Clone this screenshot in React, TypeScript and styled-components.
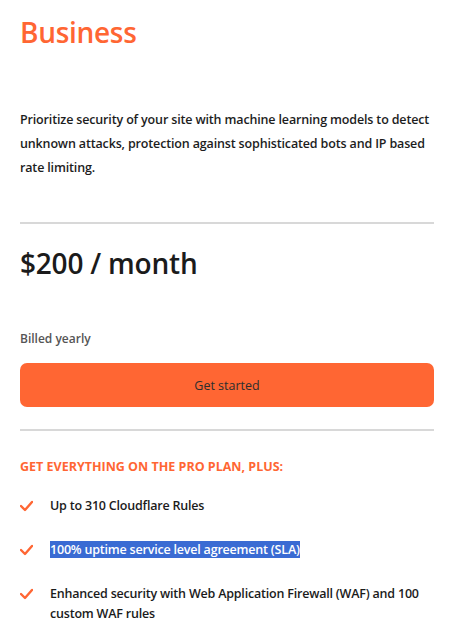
import React from "react";
import styled, { createGlobalStyle } from "styled-components";

const orange = "#ff6633";

const GlobalStyle = createGlobalStyle`
  html, body {
    margin: 0;
    padding: 0;
    background: #ffffff;
  }
  body {
    font-family: "Open Sans", "Noto Sans", sans-serif;
    color: #1b1b1b;
  }
`;

const Card = styled.div`
  width: 454px;
  box-sizing: border-box;
  padding: 12px 20px 0 20px;
  display: flex;
  flex-direction: column;
`;

const Title = styled.h2`
  margin: 0;
  font-size: 28px;
  line-height: 40px;
  font-weight: 600;
  letter-spacing: -0.3px;
  color: ${orange};
`;

const Description = styled.p`
  margin: 56px 0 0 0;
  font-size: 12.5px;
  line-height: 24px;
  font-weight: 600;
  letter-spacing: -0.15px;
  color: #1d1d1d;
`;

const Divider = styled.hr<{ $top: number }>`
  margin: ${(p) => p.$top}px 0 0 0;
  border: none;
  height: 2px;
  background: #d8d8d8;
`;

const Price = styled.div`
  margin-top: 19px;
  font-size: 28px;
  line-height: 40px;
  font-weight: 600;
  letter-spacing: -0.2px;
  color: #1b1b1b;
`;

const Billed = styled.div`
  margin-top: 46px;
  font-size: 12px;
  line-height: 20px;
  font-weight: 600;
  color: #555555;
`;

const Button = styled.button`
  margin-top: 14px;
  height: 44px;
  width: 100%;
  border: none;
  border-radius: 7px;
  background: ${orange};
  color: #2e2e2e;
  font-family: inherit;
  font-size: 12.5px;
  font-weight: 500;
  cursor: pointer;
`;

const Heading = styled.div`
  margin-top: 26px;
  font-size: 12.5px;
  line-height: 20px;
  font-weight: 700;
  color: ${orange};
  text-transform: uppercase;
`;

const List = styled.ul`
  list-style: none;
  margin: 19px 0 0 0;
  padding: 0;
  display: flex;
  flex-direction: column;
  gap: 24px;
`;

const Item = styled.li`
  display: flex;
  align-items: flex-start;
  gap: 17px;
  font-size: 12.5px;
  line-height: 20px;
  font-weight: 600;
  letter-spacing: -0.2px;
  color: #1b1b1b;
`;

const Check = styled.svg`
  flex: none;
  width: 13px;
  height: 20px;
`;

const Selected = styled.span`
  background: #3a6bd3;
  color: #ffffff;
`;

const CheckIcon = () => (
  <Check viewBox="0 0 13 20">
    <polyline
      points="1,10 5,14 12,6"
      fill="none"
      stroke={orange}
      strokeWidth="2.4"
      strokeLinecap="round"
      strokeLinejoin="round"
    />
  </Check>
);

export default function App() {
  return (
    <>
      <GlobalStyle />
      <Card>
        <Title>Business</Title>
        <Description>
          Prioritize security of your site with machine learning models to detect
          unknown attacks, protection against sophisticated bots and IP based rate
          limiting.
        </Description>
        <Divider $top={42} />
        <Price>$200 / month</Price>
        <Billed>Billed yearly</Billed>
        <Button>Get started</Button>
        <Divider $top={22} />
        <Heading>Get everything on the Pro plan, plus:</Heading>
        <List>
          <Item>
            <CheckIcon />
            <span>Up to 310 Cloudflare Rules</span>
          </Item>
          <Item>
            <CheckIcon />
            <span>
              <Selected>100% uptime service level agreement (SLA)</Selected>
            </span>
          </Item>
          <Item>
            <CheckIcon />
            <span>
              Enhanced security with Web Application Firewall (WAF) and 100 custom
              WAF rules
            </span>
          </Item>
        </List>
      </Card>
    </>
  );
}
